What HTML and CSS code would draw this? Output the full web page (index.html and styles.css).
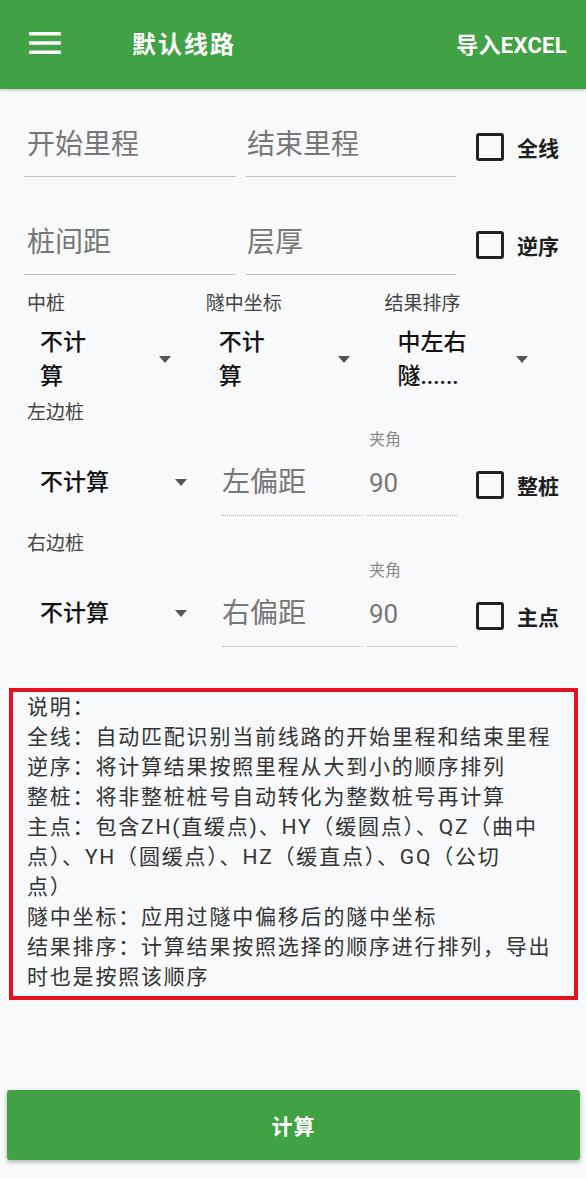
FILE: index.html
```html
<!DOCTYPE html>
<html lang="zh-CN">
<head>
<meta charset="utf-8">
<title>默认线路</title>
<link rel="stylesheet" href="styles.css">
</head>
<body>
<header class="appbar">
  <svg class="menu" width="32" height="22" viewBox="0 0 32 22" aria-hidden="true">
    <rect x="0" y="0" width="32" height="3.6" rx="1" fill="#fff"/>
    <rect x="0" y="9.2" width="32" height="3.6" rx="1" fill="#fff"/>
    <rect x="0" y="18.4" width="32" height="3.6" rx="1" fill="#fff"/>
  </svg>
  <div class="title">默认线路</div>
  <div class="action">导入EXCEL</div>
</header>

<main class="form">
  <div class="row">
    <div class="field w1"><span class="ph">开始里程</span></div>
    <div class="field w2"><span class="ph">结束里程</span></div>
    <div class="check"><span class="box"></span><span class="cl">全线</span></div>
  </div>
  <div class="row row2">
    <div class="field w1"><span class="ph">桩间距</span></div>
    <div class="field w2"><span class="ph">层厚</span></div>
    <div class="check"><span class="box"></span><span class="cl">逆序</span></div>
  </div>

  <div class="selects">
    <div class="sel">
      <div class="sl">中桩</div>
      <div class="sv"><span class="val">不计<br>算</span><span class="arrow"></span></div>
    </div>
    <div class="sel">
      <div class="sl">隧中坐标</div>
      <div class="sv"><span class="val">不计<br>算</span><span class="arrow"></span></div>
    </div>
    <div class="sel">
      <div class="sl">结果排序</div>
      <div class="sv"><span class="val">中左右<br>隧......</span><span class="arrow"></span></div>
    </div>
  </div>

  <div class="sub">左边桩</div>
  <div class="edge">
    <div class="drop"><span class="val">不计算</span><span class="arrow"></span></div>
    <div class="ofield off"><div class="mini"></div><div class="line ph">左偏距</div></div>
    <div class="ofield ang"><div class="mini">夹角</div><div class="line num">90</div></div>
    <div class="check edgecheck"><span class="box"></span><span class="cl">整桩</span></div>
  </div>

  <div class="sub sub2">右边桩</div>
  <div class="edge">
    <div class="drop"><span class="val">不计算</span><span class="arrow"></span></div>
    <div class="ofield off"><div class="mini"></div><div class="line ph">右偏距</div></div>
    <div class="ofield ang"><div class="mini">夹角</div><div class="line num">90</div></div>
    <div class="check edgecheck"><span class="box"></span><span class="cl">主点</span></div>
  </div>
</main>

<section class="notes">
  说明：<br>
  全线：自动匹配识别当前线路的开始里程和结束里程<br>
  逆序：将计算结果按照里程从大到小的顺序排列<br>
  整桩：将非整桩桩号自动转化为整数桩号再计算<br>
  主点：包含ZH(直缓点)、HY（缓圆点）、QZ（曲中<br>
  点）、YH（圆缓点）、HZ（缓直点）、GQ（公切<br>
  点）<br>
  隧中坐标：应用过隧中偏移后的隧中坐标<br>
  结果排序：计算结果按照选择的顺序进行排列，导出<br>
  时也是按照该顺序
</section>

<button class="calc" type="button">计算</button>
</body>
</html>
```

FILE: styles.css
```css
* { box-sizing: border-box; }

html, body {
  margin: 0;
  padding: 0;
}

body {
  min-height: 100vh;
  display: flex;
  flex-direction: column;
  background: #f7f9fa;
  font-family: Roboto, "Noto Sans CJK SC", "Noto Sans", sans-serif;
  color: #222;
}

/* ---------- app bar ---------- */
.appbar {
  height: 89px;
  flex: none;
  display: flex;
  align-items: center;
  padding: 0 19px 0 29px;
  background: #41a245;
  color: #fff;
  box-shadow: 0 1px 3px rgba(0, 0, 0, 0.25);
}

.menu {
  flex: none;
  display: block;
  margin-top: -3px;
}

.title {
  margin-left: 71px;
  font-size: 24px;
  font-weight: 700;
  letter-spacing: 2px;
  margin-top: -4px;
}

.action {
  margin-left: auto;
  font-size: 22px;
  font-weight: 700;
  letter-spacing: 0.3px;
  margin-top: -4px;
}

/* ---------- form ---------- */
.form {
  padding: 36px 26px 0 24px;
}

.row {
  display: flex;
  align-items: flex-start;
}

.row2 {
  margin-top: 46px;
}

.field {
  height: 52px;
  line-height: 40px;
  padding: 0 0 11px 3px;
  border-bottom: 1px solid #c4c4c4;
}

.w1 { width: 212px; margin-right: 10px; }
.w2 { width: 210px; padding-left: 1px; }

.ph {
  font-size: 28px;
  color: #777;
}

.check {
  display: flex;
  align-items: center;
  height: 40px;
  margin-left: 20px;
  padding-top: 3px;
}

.box {
  width: 28px;
  height: 28px;
  border: 3px solid #222;
  border-radius: 3px;
  flex: none;
}

.cl {
  margin-left: 13px;
  font-size: 21px;
  font-weight: 700;
  color: #1e1e1e;
}

/* ---------- dropdown row ---------- */
.selects {
  margin-top: 16px;
  display: grid;
  grid-template-columns: repeat(3, 178.7px);
}

.sl, .sub {
  font-size: 19px;
  line-height: 26px;
  padding-left: 3px;
  color: #444;
}

.sv {
  margin-top: 9px;
  height: 68px;
  display: flex;
  align-items: center;
}

.val {
  flex: none;
  font-size: 23px;
  line-height: 34px;
  font-weight: 500;
  color: #111;
}

.sv .val {
  width: 135px;
  padding-left: 16px;
}

.arrow {
  flex: none;
  width: 0;
  height: 0;
  border-left: 6px solid transparent;
  border-right: 6px solid transparent;
  border-top: 7px solid #555;
  margin-top: -2px;
}

/* ---------- edge rows ---------- */
.sub {
  margin-top: 6px;
}

.sub2 {
  margin-top: 15px;
}

.edge {
  margin-top: 4px;
  display: flex;
  align-items: flex-start;
}

.drop {
  width: 188px;
  height: 40px;
  margin-top: 33px;
  display: flex;
  align-items: center;
}

.drop .val {
  width: 151px;
  padding-left: 16px;
}

.ofield {
  display: flex;
  flex-direction: column;
  border-bottom: 1px dotted #b3b3b3;
  padding-bottom: 12px;
}

.off {
  width: 140px;
  margin-left: 10px;
  margin-right: 5px;
}

.ang {
  width: 90px;
  padding-left: 2px;
}

.mini {
  height: 20px;
  line-height: 20px;
  font-size: 16px;
  color: #8a8a8a;
  margin-bottom: 13px;
}

.line {
  height: 40px;
  line-height: 40px;
}

.num {
  font-size: 26px;
  color: #777;
}

.edgecheck {
  margin-top: 33px;
  margin-left: 19px;
}

/* ---------- notes ---------- */
.notes {
  margin: 41px 8px 0 9px;
  border: 4px solid #e2121f;
  padding: 0 8px 4px 14px;
  font-size: 21px;
  line-height: 30px;
  letter-spacing: 1.8px;
  color: #333;
  white-space: nowrap;
}

/* ---------- button ---------- */
.calc {
  margin: auto 6px 18px 7px;
  height: 70px;
  border: none;
  border-radius: 3px;
  background: #41a245;
  color: #fff;
  font-family: Roboto, "Noto Sans CJK SC", sans-serif;
  font-size: 21px;
  font-weight: 700;
  letter-spacing: 1px;
  box-shadow: 0 2px 4px rgba(0, 0, 0, 0.3);
}
```
